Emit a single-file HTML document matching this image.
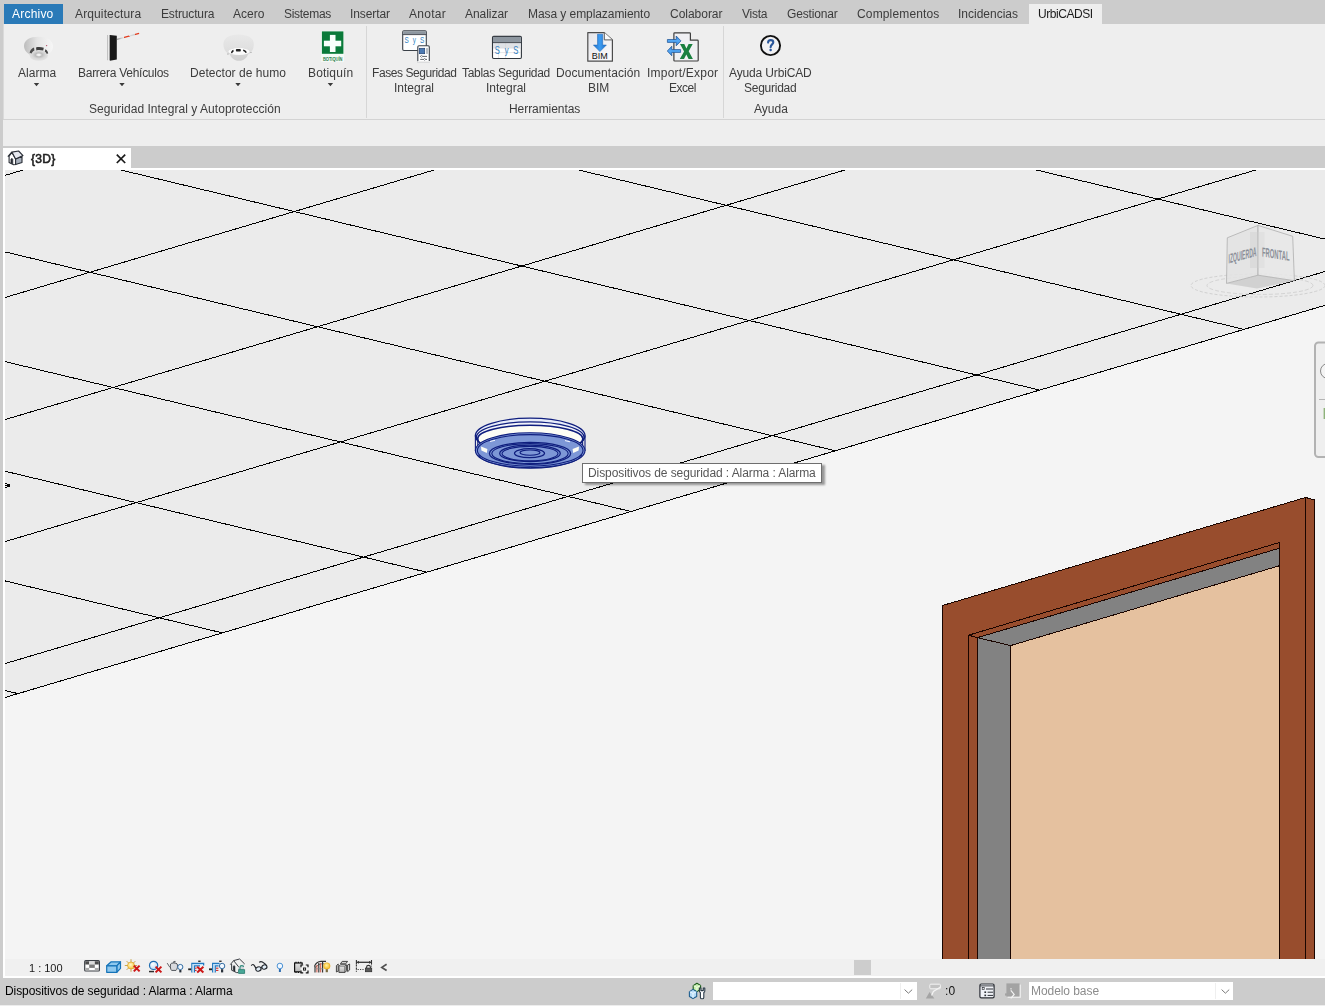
<!DOCTYPE html>
<html><head><meta charset="utf-8"><title>Revit</title><style>
html,body{margin:0;padding:0}
body{width:1325px;height:1006px;position:relative;overflow:hidden;background:#cccccc;font-family:"Liberation Sans",sans-serif;}
div,span,svg{position:absolute}
.t{white-space:nowrap;line-height:1;will-change:transform}
</style></head><body>
<div style="left:4px;top:4px;width:59px;height:20px;background:#2a7ab8"></div>
<div style="left:1029px;top:4px;width:73px;height:20px;background:#eeeeee"></div>
<div style="left:3px;top:24px;width:1px;height:95px;background:#dadada"></div>
<div style="left:4px;top:24px;width:1321px;height:95px;background:#eeeeee"></div>
<div style="left:3px;top:119px;width:1322px;height:1px;background:#d3d3d3"></div>
<div style="left:3px;top:120px;width:1322px;height:26px;background:#eeeeee"></div>
<div style="left:366px;top:26px;width:1px;height:92px;background:#d6d6d6"></div>
<div style="left:723px;top:26px;width:1px;height:92px;background:#d6d6d6"></div>
<div style="left:3px;top:148px;width:128px;height:22px;background:#ffffff"></div>
<div style="left:3px;top:168px;width:1322px;height:2px;background:#ffffff"></div>
<div style="left:3px;top:168px;width:2px;height:810px;background:#ffffff"></div>
<svg style="position:absolute;left:5px;top:170px" width="1320" height="789" viewBox="5 170 1320 789">
<rect x="5" y="170" width="1320" height="789" fill="#f4f4f4"/>
<polygon points="5,170 1325,170 1325,305.3 5,697.5" fill="#ebebeb"/>
<g stroke="#000" stroke-width="1" shape-rendering="crispEdges"><line x1="5.0" y1="175.4" x2="23.2" y2="170.0"/><line x1="5.0" y1="297.5" x2="434.1" y2="170.0"/><line x1="5.0" y1="419.6" x2="844.9" y2="170.0"/><line x1="5.0" y1="541.6" x2="1255.7" y2="170.0"/><line x1="5.0" y1="663.6" x2="1325.0" y2="271.5"/><line x1="5.0" y1="697.5" x2="1325.0" y2="305.3"/><line x1="1036.5" y1="170.0" x2="1325.0" y2="239.1"/><line x1="578.7" y1="170.0" x2="1244.1" y2="329.4"/><line x1="120.9" y1="170.0" x2="1039.7" y2="390.1"/><line x1="5.0" y1="251.9" x2="835.4" y2="450.8"/><line x1="5.0" y1="361.6" x2="631.0" y2="511.5"/><line x1="5.0" y1="471.2" x2="426.7" y2="572.2"/><line x1="5.0" y1="580.9" x2="222.4" y2="632.9"/><line x1="5.0" y1="690.5" x2="18.0" y2="693.6"/></g>
<path d="M5,483h2v1h-2z M5,485h2v1h-2z M5,487h2v1h-2z M7,484h3v3h-3z" fill="#000" shape-rendering="crispEdges"/>

<g stroke="#1a0500" stroke-width="1" shape-rendering="crispEdges">
<polygon points="942.5,605.5 1305.5,497.5 1305.5,960 942.5,960" fill="#984d2d"/>
<polygon points="1305.5,497.5 1314.5,499.8 1314.5,960 1305.5,960" fill="#984d2d"/>
<polygon points="968.5,635.2 1279.5,542.5 1279.5,960 968.5,960" fill="#984d2d"/>
<polygon points="977.5,637.6 1279.5,548.2 1279.5,960 977.5,960" fill="#828282"/>
<polygon points="1010.5,645.6 1279.5,565.7 1279.5,960 1010.5,960" fill="#e5c19f"/>
<line x1="968.5" y1="635.2" x2="977.5" y2="637.6"/>
<line x1="977.5" y1="637.6" x2="1010.5" y2="645.6"/>
</g>


<g fill="none" stroke="#0f1e7e" stroke-width="1.1">
<ellipse cx="530.2" cy="435.6" rx="54.8" ry="17.4" fill="#e6ebf9" stroke-width="1.3"/>
<ellipse cx="530.2" cy="437.2" rx="53.8" ry="15.4" fill="#f1f3fa" stroke-width="1.3"/>
<ellipse cx="530.2" cy="438.7" rx="52.6" ry="13.4" fill="#fdfdf5" stroke-width="1.4"/>
<path d="M475.4,435.6 V451 M585,435.6 V451"/>
<path d="M477.8,438 V448 M582.6,438 V448"/>
<ellipse cx="530.2" cy="450.5" rx="54.8" ry="17.8" fill="#7d97d6"/>
<ellipse cx="530.2" cy="450.4" rx="52.8" ry="15.8"/>
<path d="M478.5,455 A52,14 0 0 0 582,455" stroke-width="1"/>
<ellipse cx="530" cy="453.4" rx="40.6" ry="11" stroke-width="1.3"/>
<ellipse cx="530" cy="453.6" rx="38.2" ry="10"/>
<ellipse cx="530" cy="453.4" rx="30.3" ry="8.2" stroke-width="1.3"/>
<ellipse cx="530" cy="453.6" rx="28" ry="7.2"/>
<ellipse cx="529.5" cy="453.2" rx="15" ry="4.5" stroke-width="1.3"/>
<ellipse cx="530" cy="452.6" rx="10" ry="2.6"/>
<path d="M481,446.4 l6.4,2.6 l-0.6,4 l-5.4,-2.6z M579,446.4 l-6.4,2.6 l0.6,4 l5.4,-2.6z" fill="#fdfdf4" stroke="none"/>
<path d="M490,441.5 l5,-1.2 M565,440.6 l5,1.2" stroke="#f4f6ff" stroke-width="1"/>
</g>


<g opacity="0.9">
<ellipse cx="1258" cy="285.5" rx="67" ry="11.5" fill="none" stroke="#cfcfcf" stroke-width="1" stroke-dasharray="3 2"/>
<ellipse cx="1260" cy="285.5" rx="53" ry="9" fill="none" stroke="#d2d2d2" stroke-width="1" stroke-dasharray="4 2"/>
<polygon points="1226.5,283.4 1258,275.2 1294.4,280.7 1257,288.5" fill="#cfcfcf" stroke="none"/>
<polygon points="1227.3,237.8 1258,225.4 1258,275.2 1226.5,283.4" fill="#e3e3e3" fill-opacity="0.85" stroke="#a8a8a8" stroke-width="0.8"/>
<polygon points="1258,225.4 1292.7,236.3 1294.4,280.7 1258,275.2" fill="#e8e8e8" fill-opacity="0.85" stroke="#a8a8a8" stroke-width="0.8"/>
<rect x="1250" y="232" width="7.5" height="36" fill="#cfcfcf" opacity="0.45"/><rect x="1258.5" y="232" width="6" height="36" fill="#d6d6d6" opacity="0.45"/>
<g font-family="Liberation Sans, sans-serif" font-size="8.5" fill="#80858f" font-weight="700">
<text transform="matrix(1,-0.27,0,1.55,1228.5,263.5)" textLength="28" lengthAdjust="spacingAndGlyphs">IZQUIERDA</text>
<text transform="matrix(1,0.16,0,1.55,1262,256.5)" textLength="27.5" lengthAdjust="spacingAndGlyphs">FRONTAL</text>
</g>
</g>


<g>
<rect x="1315" y="342.5" width="20" height="114.5" rx="3.5" fill="#efefef" stroke="#b2b2b2" stroke-width="2"/>
<circle cx="1328" cy="371" r="7.5" fill="#f4f4f4" stroke="#8a8a8a" stroke-width="1"/>
<line x1="1319" y1="399.5" x2="1325" y2="399.5" stroke="#b5b5b5"/>
<rect x="1323.6" y="408" width="2" height="11" fill="#8fb37c"/>
</g>

</svg>
<div style="left:5px;top:959px;width:1320px;height:17px;background:#f0f0f0"></div>
<div style="left:854px;top:960px;width:17px;height:15px;background:#cdcdcd"></div>
<div style="left:3px;top:976px;width:1322px;height:2px;background:#ffffff"></div>
<div style="left:0px;top:1005px;width:1325px;height:1px;background:#ededed"></div>
<div style="left:713px;top:982px;width:204px;height:18px;background:#ffffff"></div>
<div style="left:900px;top:983px;width:1px;height:16px;background:#efefef"></div>
<div style="left:1029px;top:982px;width:204px;height:18px;background:#ffffff"></div>
<div style="left:1215px;top:983px;width:1px;height:16px;background:#efefef"></div>
<div style="left:582px;top:463px;width:238px;height:18px;background:#ffffff;border:1px solid #6e6e6e;box-shadow:3px 2px 2px rgba(0,0,0,0.38)"></div>
<svg style="left:0;top:24px" width="1325" height="95" viewBox="0 24 1325 95">
<defs>
<linearGradient id="gA" x1="0" y1="0" x2="1" y2="0"><stop offset="0" stop-color="#bcbcbc"/><stop offset="0.45" stop-color="#e4e4e4"/><stop offset="1" stop-color="#f6f6f6"/></linearGradient>
<radialGradient id="gA2" cx="0.5" cy="0.45" r="0.6"><stop offset="0" stop-color="#f8f8f8"/><stop offset="0.12" stop-color="#f0f0f0"/><stop offset="0.3" stop-color="#bcbcbc"/><stop offset="0.6" stop-color="#d8d8d8"/><stop offset="1" stop-color="#e6e6e6"/></radialGradient>
<linearGradient id="gD" x1="0" y1="0" x2="0" y2="1"><stop offset="0" stop-color="#e9e9e9"/><stop offset="1" stop-color="#dcdcdc"/></linearGradient>
<linearGradient id="gD2" x1="0" y1="0" x2="0" y2="1"><stop offset="0" stop-color="#fafafa"/><stop offset="0.4" stop-color="#d6d6d6"/><stop offset="1" stop-color="#cfcfcf"/></linearGradient>
<linearGradient id="gS" x1="0" y1="0" x2="1" y2="0"><stop offset="0" stop-color="#a6a6a6"/><stop offset="0.45" stop-color="#ececec"/><stop offset="1" stop-color="#8a8a8a"/></linearGradient>
<linearGradient id="gArm" gradientUnits="userSpaceOnUse" x1="117.4" y1="39.3" x2="139.1" y2="33.3"><stop offset="0" stop-color="#9a9a9a"/><stop offset="0.30" stop-color="#e8e8e8"/><stop offset="0.31" stop-color="#e23a1c"/><stop offset="0.55" stop-color="#e23a1c"/><stop offset="0.56" stop-color="#dcdcdc"/><stop offset="0.80" stop-color="#c8c8c8"/><stop offset="0.81" stop-color="#e23a1c"/><stop offset="1" stop-color="#e23a1c"/></linearGradient>
<linearGradient id="gBl" x1="0" y1="0" x2="1" y2="0"><stop offset="0" stop-color="#1f6fc8"/><stop offset="0.5" stop-color="#3c9cf2"/><stop offset="1" stop-color="#1f6fc8"/></linearGradient>
<linearGradient id="gBl2" x1="0" y1="0" x2="0" y2="1"><stop offset="0" stop-color="#2a7fd8"/><stop offset="0.5" stop-color="#55aaf8"/><stop offset="1" stop-color="#2a7fd8"/></linearGradient>
<linearGradient id="gPg" x1="0" y1="0" x2="1" y2="1"><stop offset="0" stop-color="#e6e6ea"/><stop offset="1" stop-color="#fbfbfd"/></linearGradient>
</defs>
<!-- Alarma -->
<g>
<path d="M24,46 C24,40 30,36.8 38.5,36.8 C47,36.8 53,40.5 53,46.5 C53,51 49,55.5 43,56.5 L33,56 C27,54 24,50 24,46Z" fill="url(#gA)"/>
<ellipse cx="38.8" cy="55.4" rx="9.2" ry="5.3" fill="url(#gA2)"/>
<path d="M29.6,52.8 C30,50.2 31.8,48.4 34,47.6 L34.4,50.4 C33,51 32.2,52 31.6,53.6Z" fill="#4c4c4c"/>
<path d="M36,47.4 C38.6,46.8 41.4,47 43.8,47.8 L43.2,50.6 C41,50 38.6,49.9 36.4,50.4Z" fill="#3e3e3e"/>
<path d="M45.4,49.2 C47,50 48,51.6 48.2,53.4 L46.6,53.8 C46.4,52.8 45.8,52 44.8,51.4Z" fill="#444"/>
<circle cx="46.6" cy="45.6" r="0.7" fill="#b4506a"/>
</g>
<!-- Barrera -->
<g>
<rect x="107.2" y="35" width="3" height="25.2" fill="url(#gS)"/>
<path d="M109.9,34.9 L116.8,35.8 L116.8,59.4 L109.9,60.8Z" fill="#191919"/>
<line x1="117" y1="39.4" x2="139.1" y2="33.3" stroke="url(#gArm)" stroke-width="1.3"/>
</g>
<!-- Detector de humo -->
<g>
<path d="M223.4,44 C223.4,38 229,34.4 238.5,34.4 C248,34.4 253.8,38 253.8,44 C253.8,49 252,52.4 248,54.5 L230,54.5 C225.6,52.6 223.4,49 223.4,44Z" fill="url(#gD)"/>
<path d="M229.6,53 C230.5,49.6 234,48 239,48 C244,48 247.4,49.6 248.2,53 C247.6,57.6 244,60.8 239,60.8 C234,60.8 230.4,57.6 229.6,53Z" fill="url(#gD2)"/>
<ellipse cx="239" cy="51.6" rx="10.6" ry="3.4" fill="#fbfbfb"/>
<path d="M231,52.8 C231.2,51.4 232,50.4 233.2,49.8 L233.8,51.2 C233,51.8 232.4,52.4 232,53.4Z" fill="#1c1c1c"/>
<rect x="235.9" y="49" width="4.9" height="2.5" rx="0.8" fill="#242424"/>
<path d="M243.4,49.6 C245,50 246.2,51 246.8,52.4 L245.6,53 C245,52 244.2,51.4 243,51Z" fill="#1c1c1c"/>
<rect x="227" y="53.4" width="1.8" height="1.2" fill="#bdbdbd"/>
<rect x="250" y="52" width="1.8" height="1" fill="#bdbdbd"/>
</g>
<!-- Botiquin -->
<g>
<rect x="321.2" y="30.8" width="22.8" height="31" fill="#f4fbf7"/>
<rect x="321.9" y="31.4" width="21.5" height="22.4" fill="#0a7a3a"/>
<rect x="323.9" y="40.7" width="17.3" height="5.6" fill="#f8fffb"/>
<rect x="329.9" y="34.9" width="5.6" height="17.1" fill="#f8fffb"/>
<text x="322.9" y="60.8" font-family="Liberation Sans, sans-serif" font-weight="700" font-size="4.8" fill="#2c7c4c" textLength="19.6" lengthAdjust="spacingAndGlyphs">BOTIQUÍN</text>
</g>
<!-- Fases Seguridad -->
<g>
<rect x="402.7" y="30.7" width="23.6" height="19.8" rx="1.2" fill="#ffffff" stroke="#3a4048" stroke-width="1.1"/>
<rect x="403.2" y="31.2" width="22.6" height="3.2" fill="#8d969f"/>
<line x1="402.7" y1="34.6" x2="426.3" y2="34.6" stroke="#3a4048" stroke-width="0.9"/>
<text transform="translate(404.5,42.8) scale(0.68,1)" font-family="Liberation Sans, sans-serif" font-size="9.4" fill="#2e7fc2" textLength="29.2" lengthAdjust="spacing">SyS</text>
<path d="M417.8,61.8 V47 Q417.8,45.8 419,45.8 H428.1 Q429.3,45.8 429.3,47 V61.8Z" fill="#ffffff" stroke="#3a4048" stroke-width="1.1"/>
<rect x="417.2" y="61" width="12.8" height="1.6" fill="#eeeeee"/>
<rect x="419.3" y="48.3" width="5.4" height="5.4" fill="#4c7ab2" stroke="#1f3f70" stroke-width="0.7"/>
<rect x="426.2" y="48.1" width="1.6" height="5.8" fill="#a7aeb6"/>
<path d="M420.2,56.4 H427 M420.2,59.4 H427" stroke="#3a4048" stroke-width="0.8"/>
<path d="M421.6,55.3 l1.1,1.1 l-1.1,1.1 l-1.1,-1.1z M424.6,58.3 l1.1,1.1 l-1.1,1.1 l-1.1,-1.1z" fill="#ffffff" stroke="#3a4048" stroke-width="0.5"/>
</g>
<!-- Tablas Seguridad -->
<g>
<rect x="492.5" y="36.4" width="28.9" height="22.1" rx="1.2" fill="#ffffff" stroke="#30363d" stroke-width="1.1"/>
<rect x="493" y="36.9" width="27.9" height="5.3" fill="#8d969f"/>
<rect x="493" y="43" width="27.9" height="5" fill="#dfe2e6"/>
<path d="M493,48.2 H521 M493,52.6 H521 M498.6,43 V58 M505.6,43 V58" stroke="#d4d4d8" stroke-width="0.6" fill="none"/>
<line x1="492.5" y1="42.6" x2="521.4" y2="42.6" stroke="#30363d" stroke-width="0.9"/>
<text transform="translate(494.8,54) scale(0.66,1)" font-family="Liberation Sans, sans-serif" font-size="11.6" fill="#2e7fc2" textLength="35.6" lengthAdjust="spacing">SyS</text>
</g>
<!-- Documentacion BIM -->
<g>
<path d="M587.8,32.6 H604.3 L612.4,39.9 V61.2 H587.8Z" fill="url(#gPg)" stroke="#4c4c4c" stroke-width="1.2" stroke-linejoin="round"/>
<path d="M604.3,32.6 V39.9 H612.4" fill="#fafafa" stroke="#5a5a5a" stroke-width="1"/>
<path d="M597.5,34.2 H602.7 V45 H606.4 L599.9,51.6 L593.4,45 H597.5Z" fill="url(#gBl)" stroke="#1a62b4" stroke-width="0.5"/>
<text x="591.7" y="59.4" font-family="Liberation Sans, sans-serif" font-size="9" fill="#111" textLength="16" lengthAdjust="spacingAndGlyphs">BIM</text>
</g>
<!-- Import/Export Excel -->
<g>
<path d="M673.9,33.6 Q673.9,32.8 674.7,32.8 H689.6 Q690.4,32.8 690.4,33.6 V40.1 H697.4 Q698.2,40.1 698.2,40.9 V60.2 Q698.2,61 697.4,61 H674.7 Q673.9,61 673.9,60.2Z" fill="#f0f0f3" stroke="#3e3e3e" stroke-width="1.2"/>
<path d="M667.4,39.5 H676.2 V36 L681,40.9 L676.2,45.8 V42.4 H667.4Z" fill="url(#gBl2)" stroke="#1c4f8f" stroke-width="0.7" stroke-linejoin="round"/>
<path d="M680.6,49.6 H671.8 V46.2 L667.3,51 L671.8,55.8 V52.4 H680.6Z" fill="url(#gBl2)" stroke="#1c4f8f" stroke-width="0.7" stroke-linejoin="round"/>
<path d="M680,44.1 H684.3 L686.4,48.4 L688.6,44.1 H692.7 L688.7,51.3 L692.9,59 H688.6 L686.3,54.4 L684,59 H679.8 L684.1,51.4Z" fill="#1a8040"/>
</g>
<!-- Ayuda -->
<g>
<circle cx="770.5" cy="45.5" r="9.6" fill="#f1f1f3" stroke="#101010" stroke-width="1.9"/>
<path d="M768.1,42.6 C768.1,40.9 769.2,40.1 770.7,40.1 C772.3,40.1 773.3,41 773.3,42.3 C773.3,44.4 770.6,44.4 770.6,47.2" fill="none" stroke="#2b579a" stroke-width="2.1" stroke-linecap="round"/>
<circle cx="770.6" cy="50" r="1.25" fill="#2b579a"/>
</g>
<!-- dropdown arrows -->
<path d="M33.8,83 h5.4 l-2.7,3.2z M119.3,83 h5.4 l-2.7,3.2z M235.3,83 h5.4 l-2.7,3.2z M327.7,83 h5.4 l-2.7,3.2z" fill="#3a3a3a"/>
</svg>
<svg style="left:0;top:146px" width="140" height="24" viewBox="0 146 140 24">
<!-- 3D house -->
<g stroke="#2a2e36" stroke-width="1.1" stroke-linejoin="round">
<path d="M9.1,156.3 V162.5 L13.6,164.7 L15.6,164.5 V158.9 L11.9,152.4Z" fill="#ffffff"/>
<path d="M15.6,158.9 L22,156.2 V162.4 L15.6,164.6Z" fill="#a9b1bd"/>
<path d="M11.9,152.1 L18.6,151 L23,155.6 L15.6,158.9Z" fill="#e6e8ef"/>
<path d="M11.9,152.1 L7.9,156.6" fill="none" stroke-width="1.4"/>
<path d="M10.9,163.3 V159.4 Q11.8,157.2 12.8,159.4 V164" fill="#2a2e36" stroke-width="0.6"/>
</g>
<!-- close X -->
<path d="M116.8,154.6 L125.2,163 M125.2,154.6 L116.8,163" stroke="#1a1a1a" stroke-width="1.7" fill="none"/>
</svg>
<svg style="left:0;top:955px" width="1325" height="51" viewBox="0 955 1325 51">
<defs>
<radialGradient id="gSun" cx="0.45" cy="0.4" r="0.6"><stop offset="0" stop-color="#fffbd0"/><stop offset="1" stop-color="#f6c43a"/></radialGradient>
<radialGradient id="gSph" cx="0.4" cy="0.35" r="0.7"><stop offset="0" stop-color="#ffffff"/><stop offset="1" stop-color="#b4d8f6"/></radialGradient>
<radialGradient id="gYb" cx="0.45" cy="0.4" r="0.6"><stop offset="0" stop-color="#fff0a0"/><stop offset="1" stop-color="#f4b820"/></radialGradient>
<linearGradient id="gGr" x1="0" y1="0" x2="0" y2="1"><stop offset="0" stop-color="#e4e4e4"/><stop offset="1" stop-color="#b4b4b4"/></linearGradient>
</defs>
<!-- 1 detail level -->
<g>
<rect x="84.7" y="960.7" width="14.7" height="10.3" rx="1" fill="#ffffff" stroke="#3a3e44" stroke-width="1.2"/>
<rect x="85.3" y="961.3" width="3.9" height="3.2" fill="#4c4c4c"/><rect x="89.2" y="961.3" width="5.6" height="3.2" fill="#dcdcdc"/><rect x="94.8" y="961.3" width="4" height="3.2" fill="#4c4c4c"/>
<rect x="89.2" y="964.5" width="5.6" height="3.4" fill="#7a7a7a"/>
<rect x="85.3" y="967.9" width="3.9" height="2.5" fill="#a8a8a8"/><rect x="94.8" y="967.9" width="4" height="2.5" fill="#a8a8a8"/>
</g>
<!-- 2 visual style -->
<g stroke="#1573b8" stroke-width="1.2" stroke-linejoin="round" fill="#8fc8ee">
<path d="M106.7,965.8 L111.2,961.8 H120.5 L116.8,965.8Z"/>
<path d="M116.8,965.8 L120.5,961.8 V968.4 L116.8,972.3Z"/>
<rect x="106.7" y="965.8" width="10.1" height="6.5"/>
</g>
<!-- 3 sun -->
<g>
<path d="M131,959.2 V971.8 M124.8,965.5 H137.2 M126.6,961.1 L135.4,969.9 M135.4,961.1 L126.6,969.9" stroke="#b8860b" stroke-width="0.7"/>
<circle cx="131" cy="965.5" r="3.5" fill="url(#gSun)" stroke="#d89a1c" stroke-width="0.6"/>
<path d="M133.8,965.6 L139.6,971.4 M139.6,965.6 L133.8,971.4" stroke="#cc1616" stroke-width="2"/>
</g>
<!-- 4 shadows -->
<g>
<circle cx="153.6" cy="965.4" r="4.1" fill="url(#gSph)" stroke="#1f6cb0" stroke-width="1.2"/>
<rect x="149" y="970.8" width="5" height="1.5" fill="#2e2e2e"/>
<path d="M155.6,966.6 L161.4,972.4 M161.4,966.6 L155.6,972.4" stroke="#cc1616" stroke-width="2"/>
</g>
<!-- 5 teapot -->
<g fill="none" stroke="#50545a" stroke-width="1">
<path d="M170.6,964 C171,962.6 176.6,962.6 177.2,964 C178,966.4 177.2,969.4 176,970.4 H171.6 C170.6,969.6 170,967 170.6,964Z" fill="#d9dade"/>
<path d="M170.4,967.4 C168.6,966.6 168.4,964.4 167.2,963.2"/>
<path d="M173.2,962.4 L175.4,961.2" stroke-width="1.2"/>
<circle cx="180.3" cy="967" r="2.6" fill="#f2f8ff" stroke="#1f5f9a" stroke-width="0.9"/>
<rect x="179.3" y="970" width="2.1" height="2.4" fill="#28303a" stroke="none"/>
</g>
<!-- 6 crop view -->
<g>
<path d="M191.9,972.6 V963.3 H203.6 V965.6 M194.4,972.6 V965.8 H200" fill="none" stroke="#1f78c0" stroke-width="1.3"/>
<path d="M193.1,972 V964.5 H203" fill="none" stroke="#bfe0f8" stroke-width="1.2"/>
<rect x="188.2" y="968.4" width="3" height="1.8" fill="#222"/><rect x="198.2" y="960.6" width="2.4" height="1.3" fill="#222"/>
<path d="M195,968.2 h1.6 M195,970.4 h1.6" stroke="#cc1616" stroke-width="1"/>
<path d="M197.2,966.8 L203.4,972.4 M203.4,966.8 L197.2,972.4" stroke="#cc1616" stroke-width="2"/>
</g>
<!-- 7 show crop -->
<g>
<path d="M212.7,972.6 V963.3 H219.6 M215.2,972.6 V965.8 H218.6" fill="none" stroke="#1f78c0" stroke-width="1.3"/>
<path d="M213.9,972 V964.5 H219" fill="none" stroke="#bfe0f8" stroke-width="1.2"/>
<rect x="209" y="968.4" width="3" height="1.8" fill="#222"/><rect x="219.2" y="960.6" width="2.4" height="1.3" fill="#222"/>
<path d="M216,968.2 h2.4 M216,970.4 h2.4" stroke="#cc1616" stroke-width="1"/>
<circle cx="222.1" cy="966" r="2.7" fill="#f2f8ff" stroke="#1f5f9a" stroke-width="0.9"/>
<rect x="221" y="969.2" width="2.2" height="3.2" fill="#28303a"/>
</g>
<!-- 8 house + lock -->
<g fill="none" stroke="#30343a" stroke-width="0.95" stroke-linejoin="round">
<path d="M238,966.4 L244,964.2 V969 L238,972.6Z" fill="#d0d4da" stroke="none"/>
<path d="M230.3,964.6 L233.6,960.6 L239.6,959 L244.7,964"/>
<path d="M233.6,960.6 L238.6,966.8"/>
<path d="M231.6,964 V970.2 L236.6,972.6 H238"/>
<path d="M233.2,970.6 V966.6 Q234.1,964.6 235,966.6 V971.6" fill="#24282e" stroke-width="0.5"/>
<path d="M240,969.4 V967.4 Q240,965.6 241.8,965.6 Q243.4,965.6 243.6,967" stroke="#2f8c7c" stroke-width="1.1"/>
<rect x="238.6" y="969.6" width="6" height="3.8" fill="#49a898" stroke="#23776a" stroke-width="0.8"/>
</g>
<!-- 9 glasses -->
<g fill="none" stroke="#20242a" stroke-width="1.1">
<path d="M251.2,965.6 Q252.8,963.4 254.2,965.4 Q255.4,967.4 256.2,968.4"/>
<ellipse cx="258.4" cy="969" rx="2.7" ry="2.1" fill="#e2eef8" transform="rotate(-20 258.4 969)"/>
<ellipse cx="264.4" cy="967" rx="2.6" ry="2.1" fill="#e2eef8" transform="rotate(-20 264.4 967)"/>
<path d="M260.8,968 L262,967.6"/>
<path d="M259.2,962.4 Q260.6,961 262.4,962 Q265.6,963.8 266.8,966"/>
</g>
<!-- 10 bulb -->
<g>
<circle cx="279.9" cy="966" r="2.8" fill="#f2f8ff" stroke="#3a88d0" stroke-width="0.9"/>
<rect x="278.9" y="969" width="2" height="3" fill="#2e6eb2"/>
</g>
<!-- 11 film/camera -->
<g>
<rect x="294.6" y="963" width="7.6" height="8.8" fill="url(#gGr)" stroke="#111" stroke-width="1.2"/>
<path d="M295.4,962.3 h1.2 M297.8,962.3 h1.2 M300.2,962.3 h1.2 M295.4,972.5 h1.2 M297.8,972.5 h1.2 M300.2,972.5 h1.2" stroke="#111" stroke-width="1.2"/>
<rect x="300.6" y="964.6" width="8" height="8.6" fill="#f0f0f0"/>
<path d="M301,967.2 V965 H303.2 M305.8,965 H308 V967.2 M308,970.6 V972.8 H305.8 M303.2,972.8 H301 V970.6" fill="none" stroke="#111" stroke-width="1.2"/>
<rect x="303.5" y="968" width="2.1" height="2.1" fill="none" stroke="#111" stroke-width="0.9"/>
</g>
<!-- 12 analytical + bulb -->
<g fill="none">
<path d="M314.4,966.4 Q316.4,961.6 321,961.4 H326" stroke="#333" stroke-width="1.1"/>
<path d="M315.4,967.6 Q317.6,964 321.6,963.8 H324" stroke="#555" stroke-width="0.8"/>
<path d="M315,966 V972.4 M318.8,963 V972.4 M322.6,962 V972.4" stroke="#2e2e2e" stroke-width="1.1"/>
<path d="M316.9,965 V972.4 M320.7,963 V972.4" stroke="#d65a48" stroke-width="1"/>
<path d="M314.6,968.8 H323.4" stroke="#888" stroke-width="0.7"/>
<circle cx="326.8" cy="966" r="3.3" fill="url(#gYb)" stroke="#e0a010" stroke-width="0.5"/>
<rect x="325.7" y="969.2" width="2.2" height="3" fill="#7a6a40"/>
</g>
<!-- 13 boxes -->
<g stroke="#444" stroke-width="1" stroke-linejoin="round">
<path d="M340.4,963.8 L342.2,961.4 H347.6 L345.7,963.8Z" fill="#d4d4d4"/>
<path d="M336.4,965.6 L338.2,964 V971 L336.4,972Z" fill="#e0e0e0"/>
<path d="M347.6,965 L349.6,964 V970 L347.6,971.6Z" fill="#e0e0e0"/>
<rect x="338.9" y="966.4" width="6.1" height="6" fill="url(#gGr)"/>
<path d="M338.9,966.4 L340.4,964.8 H346.4 L345,966.4" fill="#eaeaea"/>
<path d="M345,972.4 L346.6,970.8 V964.8" fill="none"/>
</g>
<!-- 14 dimension lock -->
<g stroke="#333" fill="none">
<path d="M356.4,962.3 H371.5" stroke-width="1.3"/>
<path d="M356.4,960 V964.2 M371.5,960 V964.2" stroke-width="1.1"/>
<path d="M358.4,961 V963.6 M369.6,961 V963.6" stroke-width="0.9"/>
<path d="M356.4,964.4 V971.8" stroke-width="1.1" stroke-dasharray="2.2 1"/>
<path d="M357.6,969.5 H364.4" stroke-width="0.9" stroke-dasharray="1.2 1.2"/>
<path d="M371.5,964.4 V967" stroke-width="0.8" stroke-dasharray="1 1"/>
<path d="M366.6,968 V967 Q366.6,965.4 368.5,965.4 Q370.4,965.4 370.4,967 V968" stroke-width="1.1"/>
<rect x="365.4" y="968.1" width="6.3" height="3.6" fill="#5a5a5a" stroke="#333" stroke-width="0.8"/>
</g>
<!-- 15 chevron -->
<path d="M386.6,964.3 L381.8,967.4 L386.6,970.5" fill="none" stroke="#505050" stroke-width="1.7"/>
<!-- worksets -->
<g stroke-linejoin="round">
<path d="M693.2,985.6 L696.9,983.2 L700.6,985.4 V989.6 L696.9,991.6 L693.2,989.8Z" fill="#c8efb0" stroke="#1a5a1a" stroke-width="1.1"/>
<path d="M693.6,985.8 L696.9,987.4 L700.2,985.6 M696.9,987.4 V991" fill="none" stroke="#f4ffe8" stroke-width="0.9"/>
<path d="M689.4,991.6 L693,989.4 L696.7,991.6 V996.6 L693,998.6 L689.4,996.6Z" fill="#b6dcf8" stroke="#1f5f8f" stroke-width="1.1"/>
<path d="M689.8,991.8 L693,993.4 L696.3,991.8 M693,993.4 V998" fill="none" stroke="#f0faff" stroke-width="0.9"/>
<path d="M699.4,988 V991 Q699.4,992.2 700.4,992.6 V997.4 Q700.4,998.8 702.1,998.8 Q703.8,998.8 703.8,997.4 V992.6 Q704.8,992.2 704.8,991 V988 H703.3 V990.6 H700.9 V988Z" fill="#ffffff" stroke="#2a3a48" stroke-width="1.1"/>
</g>
<!-- dropdown chevrons -->
<path d="M904.6,989.6 L908.4,993.2 L912.2,989.6 M1221.6,989.6 L1225.4,993.2 L1229.2,989.6" fill="none" stroke="#7a7a7a" stroke-width="1"/>
<!-- paint (disabled) -->
<g>
<path d="M925.8,998.6 L929.6,992 L934.4,998.6Z" fill="#a4a4a4"/>
<rect x="929.8" y="984.2" width="10.6" height="4.6" rx="1" fill="#c2c2c2" stroke="#f4f4f4" stroke-width="1"/>
<path d="M940.2,987.2 L933.4,991.4 L931.6,995.4" fill="none" stroke="#f4f4f4" stroke-width="1.2"/>
</g>
<!-- design options -->
<g>
<rect x="979.9" y="984" width="14.2" height="13.8" rx="1.4" fill="#f1f3f8" stroke="#2c3036" stroke-width="1.2"/>
<path d="M980,985.9 H994" stroke="#2c3036" stroke-width="0.9"/>
<rect x="982.2" y="987.6" width="2" height="2" fill="#fff" stroke="#2c3036" stroke-width="0.7"/>
<path d="M986,989 H993 M987.6,992.2 H993 M987.6,995.4 H993" stroke="#2c3036" stroke-width="1"/>
<rect x="984.4" y="991.4" width="1.7" height="1.6" fill="#2c3036"/><rect x="984.4" y="994.6" width="1.7" height="1.6" fill="#2c3036"/>
</g>
<!-- disabled gray -->
<g>
<rect x="1007.6" y="984.6" width="13.2" height="13.2" fill="#f2f2f2"/>
<rect x="1006.4" y="983.4" width="13.2" height="13.2" fill="#a3a3a3"/>
<rect x="1005" y="993.4" width="7.4" height="2.2" fill="#a3a3a3"/>
<path d="M1010.8,990.4 L1014.2,994.4 L1010.8,998.4" fill="none" stroke="#f4f4f4" stroke-width="1.2"/>
<rect x="1010.4" y="988.2" width="1.2" height="1.2" fill="#f4f4f4"/>
</g>
</svg>

<span class="t" style="left:12.40px;top:8.14px;font-size:12px;color:#ffffff;font-weight:400;letter-spacing:0.212px">Archivo</span>
<span class="t" style="left:74.90px;top:8.14px;font-size:12px;color:#3c3c3c;font-weight:400;letter-spacing:0.125px">Arquitectura</span>
<span class="t" style="left:160.80px;top:8.14px;font-size:12px;color:#3c3c3c;font-weight:400;letter-spacing:-0.139px">Estructura</span>
<span class="t" style="left:233.40px;top:8.14px;font-size:12px;color:#3c3c3c;font-weight:400;letter-spacing:0.028px">Acero</span>
<span class="t" style="left:284.40px;top:8.14px;font-size:12px;color:#3c3c3c;font-weight:400;letter-spacing:-0.295px">Sistemas</span>
<span class="t" style="left:350.40px;top:8.14px;font-size:12px;color:#3c3c3c;font-weight:400;letter-spacing:-0.086px">Insertar</span>
<span class="t" style="left:409.40px;top:8.14px;font-size:12px;color:#3c3c3c;font-weight:400;letter-spacing:0.273px">Anotar</span>
<span class="t" style="left:465.40px;top:8.14px;font-size:12px;color:#3c3c3c;font-weight:400;letter-spacing:-0.045px">Analizar</span>
<span class="t" style="left:527.90px;top:8.14px;font-size:12px;color:#3c3c3c;font-weight:400;letter-spacing:-0.070px">Masa y emplazamiento</span>
<span class="t" style="left:669.90px;top:8.14px;font-size:12px;color:#3c3c3c;font-weight:400;letter-spacing:-0.023px">Colaborar</span>
<span class="t" style="left:741.90px;top:8.14px;font-size:12px;color:#3c3c3c;font-weight:400;letter-spacing:-0.274px">Vista</span>
<span class="t" style="left:786.90px;top:8.14px;font-size:12px;color:#3c3c3c;font-weight:400;letter-spacing:-0.170px">Gestionar</span>
<span class="t" style="left:856.90px;top:8.14px;font-size:12px;color:#3c3c3c;font-weight:400;letter-spacing:0.150px">Complementos</span>
<span class="t" style="left:958.40px;top:8.14px;font-size:12px;color:#3c3c3c;font-weight:400;letter-spacing:-0.004px">Incidencias</span>
<span class="t" style="left:1038.10px;top:8.14px;font-size:12px;color:#1c1c1c;font-weight:400;letter-spacing:-0.454px">UrbiCADSI</span>
<span class="t" style="left:17.60px;top:66.54px;font-size:12px;color:#3c3c3c;font-weight:400;letter-spacing:0.031px">Alarma</span>
<span class="t" style="left:77.80px;top:66.54px;font-size:12px;color:#3c3c3c;font-weight:400;letter-spacing:-0.270px">Barrera Vehículos</span>
<span class="t" style="left:189.80px;top:66.54px;font-size:12px;color:#3c3c3c;font-weight:400;letter-spacing:0.038px">Detector de humo</span>
<span class="t" style="left:307.70px;top:66.54px;font-size:12px;color:#3c3c3c;font-weight:400;letter-spacing:0.169px">Botiquín</span>
<span class="t" style="left:371.80px;top:66.54px;font-size:12px;color:#3c3c3c;font-weight:400;letter-spacing:-0.422px">Fases Seguridad</span>
<span class="t" style="left:393.80px;top:81.54px;font-size:12px;color:#3c3c3c;font-weight:400;letter-spacing:-0.004px">Integral</span>
<span class="t" style="left:462.30px;top:66.54px;font-size:12px;color:#3c3c3c;font-weight:400;letter-spacing:-0.302px">Tablas Seguridad</span>
<span class="t" style="left:486.40px;top:81.54px;font-size:12px;color:#3c3c3c;font-weight:400;letter-spacing:-0.004px">Integral</span>
<span class="t" style="left:556.30px;top:66.54px;font-size:12px;color:#3c3c3c;font-weight:400;letter-spacing:0.070px">Documentación</span>
<span class="t" style="left:587.50px;top:81.54px;font-size:12px;color:#3c3c3c;font-weight:400;letter-spacing:-0.048px">BIM</span>
<span class="t" style="left:646.70px;top:66.54px;font-size:12px;color:#3c3c3c;font-weight:400;letter-spacing:0.216px">Import/Expor</span>
<span class="t" style="left:668.70px;top:81.54px;font-size:12px;color:#3c3c3c;font-weight:400;letter-spacing:-0.489px">Excel</span>
<span class="t" style="left:729.00px;top:66.54px;font-size:12px;color:#3c3c3c;font-weight:400;letter-spacing:-0.145px">Ayuda UrbiCAD</span>
<span class="t" style="left:744.30px;top:81.54px;font-size:12px;color:#3c3c3c;font-weight:400;letter-spacing:-0.258px">Seguridad</span>
<span class="t" style="left:89.30px;top:102.64px;font-size:12px;color:#3c3c3c;font-weight:400;letter-spacing:0.045px">Seguridad Integral y Autoprotección</span>
<span class="t" style="left:509.10px;top:102.64px;font-size:12px;color:#3c3c3c;font-weight:400;letter-spacing:-0.069px">Herramientas</span>
<span class="t" style="left:753.90px;top:102.64px;font-size:12px;color:#3c3c3c;font-weight:400;letter-spacing:0.037px">Ayuda</span>
<span class="t" style="left:31.40px;top:153.04px;font-size:12px;color:#222222;font-weight:400;letter-spacing:0.285px;-webkit-text-stroke:0.6px #222">{3D}</span>
<span class="t" style="left:588.10px;top:466.84px;font-size:12px;color:#575757;font-weight:400;letter-spacing:-0.087px">Dispositivos de seguridad : Alarma : Alarma</span>
<span class="t" style="left:29.40px;top:962.69px;font-size:11px;color:#1a1a1a;font-weight:400;letter-spacing:-0.020px">1 : 100</span>
<span class="t" style="left:5.40px;top:984.84px;font-size:12px;color:#000000;font-weight:400;letter-spacing:-0.092px">Dispositivos de seguridad : Alarma : Alarma</span>
<span class="t" style="left:945.40px;top:985.34px;font-size:12px;color:#111111;font-weight:400;letter-spacing:0.242px">:0</span>
<span class="t" style="left:1031.40px;top:984.84px;font-size:12px;color:#8c8c8c;font-weight:400;letter-spacing:-0.065px">Modelo base</span>
</body></html>
